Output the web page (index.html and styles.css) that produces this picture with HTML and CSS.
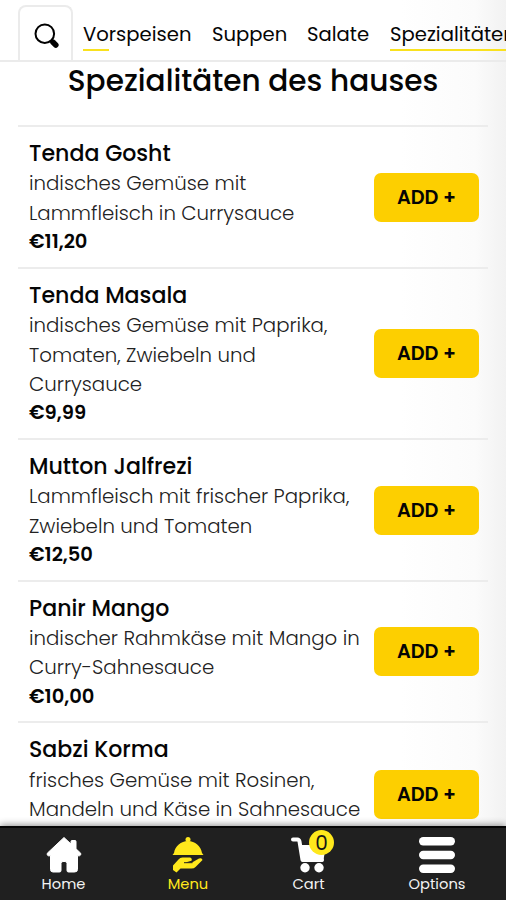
FILE: index.html
```html
<!DOCTYPE html>
<html lang="de">
<head>
<meta charset="utf-8">
<meta name="viewport" content="width=device-width, initial-scale=1">
<title>Speisekarte</title>
<link rel="stylesheet" href="styles.css">
</head>
<body>
<div class="app">
  <header class="topbar">
    <div class="search">
      <svg width="26" height="26" viewBox="0 0 26 26"><circle cx="10.8" cy="10.7" r="9.3" fill="none" stroke="#000" stroke-width="2"/><path d="M17 17.500l2 2" stroke="#000" stroke-width="2.5"/><path d="M19 19.200l2.800 2.800" stroke="#000" stroke-width="5.600" stroke-linecap="round"/></svg>
    </div>
    <nav class="tabs">
      <a class="tab t1 partial">Vorspeisen</a>
      <a class="tab t2">Suppen</a>
      <a class="tab t3">Salate</a>
      <a class="tab t4 active">Spezialitäten</a>
    </nav>
  </header>
  <main class="content">
    <h1>Spezialitäten des hauses</h1>
    <section class="item">
      <div class="info"><h2>Tenda Gosht</h2><p>indisches Gemüse mit<br>Lammfleisch in Currysauce</p><b class="price">€11,20</b></div>
      <button>ADD +</button>
    </section>
    <section class="item">
      <div class="info"><h2>Tenda Masala</h2><p>indisches Gemüse mit Paprika,<br>Tomaten, Zwiebeln und<br>Currysauce</p><b class="price">€9,99</b></div>
      <button>ADD +</button>
    </section>
    <section class="item">
      <div class="info"><h2>Mutton Jalfrezi</h2><p>Lammfleisch mit frischer Paprika,<br>Zwiebeln und Tomaten</p><b class="price">€12,50</b></div>
      <button>ADD +</button>
    </section>
    <section class="item">
      <div class="info"><h2>Panir Mango</h2><p>indischer Rahmkäse mit Mango in<br>Curry-Sahnesauce</p><b class="price">€10,00</b></div>
      <button>ADD +</button>
    </section>
    <section class="item">
      <div class="info"><h2>Sabzi Korma</h2><p>frisches Gemüse mit Rosinen,<br>Mandeln und Käse in Sahnesauce</p></div>
      <button class="low">ADD +</button>
    </section>
  </main>
  <footer class="bottombar">
    <a class="nav home">
      <svg width="36" height="37" viewBox="0 0 36 37"><path d="M18 1.500L1.300 17.200Q.5 19 2.200 19.800H4.500V33.500Q4.500 36 7 36H13.500Q15 36 15 34.500V27.500Q15 25.500 17 25.500H19Q21 25.500 21 27.500V34.500Q21 36 22.500 36H28.500Q31.500 36 31.500 33.500V19.800H33.500Q35.500 19 34.700 17.200L30 12.800V5.500Q30 4.500 29 4.500H26Q25 4.500 25 5.500V8Z" fill="#fff" stroke="#fff" stroke-linejoin="round"/></svg>
      <span>Home</span>
    </a>
    <a class="nav menu">
      <svg width="36" height="37" viewBox="0 0 36 37"><g fill="#ffe81c"><circle cx="18" cy="3.500" r="2.500"/><path d="M4 17C5 10 11 5 18 5S31 10 32 17L33.500 19H2.500Z"/><path d="M3 29.500L8.500 23.500Q10 21.500 12.500 21.500H20Q22.500 22.500 21.500 24.800L15.500 26.500H22L29 22.500Q32 21.300 32.500 24L25.500 31Q24 32.500 21.500 32.500H10.500L6.500 36.500L3 34Z"/></g><path d="M14 26.700H22.500" stroke="#202020"/></svg>
      <span>Menu</span>
    </a>
    <a class="nav cart">
      <svg width="36" height="37" viewBox="0 0 36 37"><path d="M2 3.500H6.500Q8 3.500 8.500 5.500L11.500 24H31" fill="none" stroke="#fff" stroke-width="4" stroke-linecap="round" stroke-linejoin="round"/><path d="M8 9H35L32.500 24Q32.200 26 30.500 26H12.500Z" fill="#fff"/><circle cx="14" cy="31.800" r="4.700" fill="#fff"/><circle cx="28" cy="31.800" r="4.700" fill="#fff"/></svg>
      <i class="badge">0</i>
      <span>Cart</span>
    </a>
    <a class="nav options">
      <svg width="36" height="37" viewBox="0 0 36 37"><g fill="#fff"><rect x="0" y="1" width="36" height="8.500" rx="4.200"/><rect x="0" y="14.700" width="36" height="8.500" rx="4.200"/><rect x="0" y="28.500" width="36" height="8.500" rx="4.200"/></g></svg>
      <span>Options</span>
    </a>
  </footer>
</div>
</body>
</html>
```
FILE: styles.css
```css
* { box-sizing: border-box; }
body { margin: 0; font-family: Poppins, Inter, "Open Sans", sans-serif; color: #050505; }
.app { width: 506px; height: 900px; overflow: hidden; display: flex; flex-direction: column; background: linear-gradient(90deg, #fff 0 400px, #fbfbfb 475px, #f2f2f2 506px); }
.topbar { height: 62px; flex: none; display: flex; align-items: flex-end; border-bottom: 2px solid #ebebeb; padding-left: 18px; }
.search { width: 55px; height: 55px; flex: none; border: 2px solid #ebebeb; border-bottom: 0; border-radius: 8px 8px 0 0; padding: 16px 0 0 14px; }
.tabs { display: flex; gap: 20px; height: 60px; padding: 18px 0 0 10px; white-space: nowrap; }
.tab { height: 33px; font-size: 19.600px; line-height: 33px; flex: none; border-bottom: 2px solid transparent; }
.t1 { width: 109px; }
.t2 { width: 75px; }
.t3 { width: 63px; }
.tab.active { border-color: #f9e11e; }
.tab.partial { border-image: linear-gradient(90deg, #f9e11e 27px, transparent 27px) 2; }
.content { flex: 1; min-height: 0; padding: 0 18px; }
h1 { margin: 0; height: 63px; font-size: 29.550px; line-height: 38px; font-weight: 500; text-align: center; white-space: nowrap; }
.item { display: flex; align-items: center; justify-content: space-between; border-top: 2px solid #ececec; padding: 11px 9px 11.100px 11px; }
.info { white-space: nowrap; line-height: 29.400px; padding-top: 1px; margin-bottom: -1px; }
h2 { margin: 0; font-size: 22.100px; font-weight: 500; line-height: 29.400px; }
p { margin: 0; font-size: 19.750px; font-weight: 300; color: #222; padding-top: 1px; margin-bottom: -1px; }
.price { display: block; font-size: 19.500px; font-weight: 600; }
button { width: 105px; height: 49px; flex: none; border: 0; border-radius: 7px; background: #fdcf00; font: 600 19.300px Poppins, Inter, sans-serif; color: #050505; padding: 0; position: relative; top: 0.5px; }
.low { align-self: flex-start; margin-top: 35px; }
.bottombar { height: 74px; flex: none; display: grid; grid-template-columns: 127px 122px 119px 138px; background: #202020; border-top: 2px solid #050505; box-shadow: 0 -1px 7px #8b8b8b; position: relative; }
.nav { display: flex; flex-direction: column; align-items: center; position: relative; padding-top: 8px; color: #f3f3f3; font-size: 14.700px; line-height: 23px; }
.nav svg { display: block; flex: none; }
.menu { color: #ffe81c; }
.badge { position: absolute; left: 60px; top: 2px; width: 25px; height: 25px; border-radius: 50%; background: #ffe81c; color: #161616; font-size: 20px; line-height: 26px; text-align: center; font-style: normal; }
```
